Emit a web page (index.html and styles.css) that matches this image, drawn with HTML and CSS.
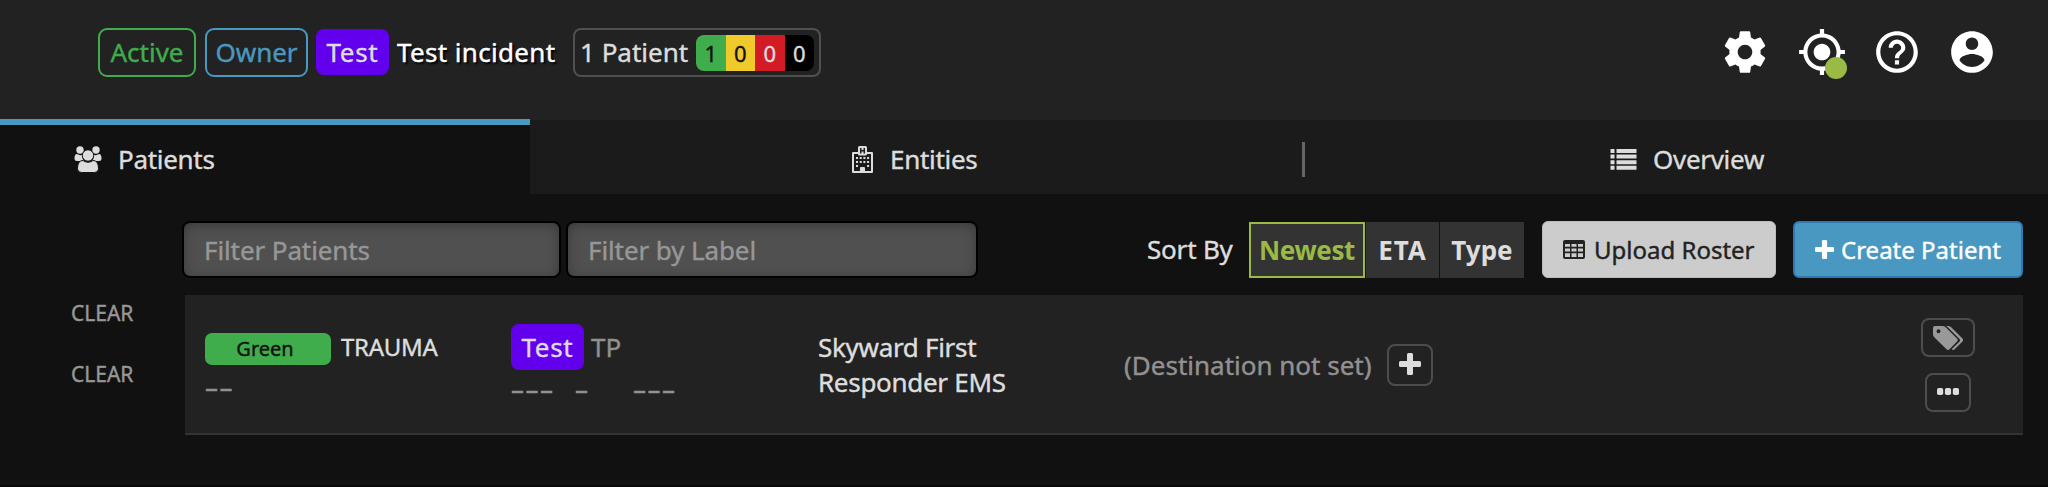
FILE: index.html
```html
<!DOCTYPE html>
<html lang="en">
<head>
    <meta charset="UTF-8">
    <meta name="viewport" content="width=device-width, initial-scale=1.0">
    <title>Test incident</title>

    <link rel="stylesheet" href="styles.css">
</head>
<body>
    <header class="header">
        <div class="badge active">Active</div>
        <div class="badge owner">Owner</div>
        <div class="label">Test</div>
        <h1>Test incident</h1>
        <div class="patient-count">
            <span>1 Patient</span>
            <div class="counts">
                <span class="green">1</span>
                <span class="yellow">0</span>
                <span class="red">0</span>
                <span class="black">0</span>
            </div>
        </div>

        <nav class="header-icons">
            <svg viewBox="0 0 24 24"><path d="M19.43 12.98c.04-.32.07-.64.07-.98s-.03-.66-.07-.98l2.11-1.65c.19-.15.24-.42.12-.64l-2-3.46c-.12-.22-.39-.3-.61-.22l-2.49 1c-.52-.4-1.08-.73-1.69-.98l-.38-2.65C14.46 2.18 14.25 2 14 2h-4c-.25 0-.46.18-.49.42l-.38 2.65c-.61.25-1.17.59-1.69.98l-2.49-1c-.23-.09-.49 0-.61.22l-2 3.46c-.13.22-.07.49.12.64l2.11 1.65c-.04.32-.07.65-.07.98s.03.66.07.98l-2.11 1.65c-.19.15-.24.42-.12.64l2 3.46c.12.22.39.3.61.22l2.49-1c.52.4 1.08.73 1.69.98l.38 2.65c.03.24.24.42.49.42h4c.25 0 .46-.18.49-.42l.38-2.65c.61-.25 1.17-.59 1.69-.98l2.49 1c.23.09.49 0 .61-.22l2-3.46c.12-.22.07-.49-.12-.64l-2.11-1.65zM12 15.5c-1.93 0-3.5-1.57-3.5-3.5s1.57-3.5 3.5-3.5 3.5 1.57 3.5 3.5-1.57 3.5-3.5 3.5z"/></svg>
            <div class="location">
                <svg viewBox="0 0 24 24"><path d="M12 8c-2.21 0-4 1.790-4 4s1.790 4 4 4 4-1.790 4-4-1.790-4-4-4zm8.940 3c-.46-4.170-3.770-7.480-7.940-7.940V1h-2v2.060C6.830 3.520 3.520 6.830 3.060 11H1v2h2.060c.46 4.170 3.770 7.480 7.940 7.940V23h2v-2.060c4.170-.46 7.480-3.770 7.940-7.940H23v-2h-2.060zM12 19c-3.870 0-7-3.130-7-7s3.130-7 7-7 7 3.130 7 7-3.130 7-7 7z"/></svg>
                <span class="status-dot"></span>
            </div>
            <svg viewBox="0 0 24 24"><path d="M11 18h2v-2h-2v2zm1-16C6.480 2 2 6.480 2 12s4.480 10 10 10 10-4.480 10-10S17.520 2 12 2zm0 18c-4.410 0-8-3.590-8-8s3.590-8 8-8 8 3.590 8 8-3.590 8-8 8zm0-14c-2.210 0-4 1.790-4 4h2c0-1.100.9-2 2-2s2 .9 2 2c0 2-3 1.750-3 5h2c0-2.250 3-2.500 3-5 0-2.210-1.790-4-4-4z"/></svg>
            <svg viewBox="0 0 24 24"><path d="M12 2C6.480 2 2 6.480 2 12s4.480 10 10 10 10-4.480 10-10S17.520 2 12 2zm0 3c1.660 0 3 1.340 3 3s-1.340 3-3 3-3-1.340-3-3 1.340-3 3-3zm0 14.200c-2.500 0-4.710-1.280-6-3.220.03-1.990 4-3.080 6-3.080 1.990 0 5.970 1.090 6 3.080-1.290 1.940-3.500 3.220-6 3.220z"/></svg>
        </nav>
    </header>

    <nav class="tabs">
        <div class="tab selected">
            <svg class="icon-users" viewBox="0 0 28 27">
                <circle cx="6" cy="4" r="3.700"/><circle cx="22" cy="4" r="3.700"/>
                <path d="M3 8q3 2 5.500.5Q7.500 12 10 15H3q-2.500 0-2.500-2.500Q.5 8 3 8zM25 8q-3 2-5.500.5Q20.500 12 18 15h7q2.500 0 2.500-2.500Q27.500 8 25 8z"/>
                <circle class="front" cx="14" cy="9.500" r="5.700"/>
                <path class="front" d="M9 14.500q5 3.500 10 0 5.500 0 5.500 8 0 4-4 4h-13q-4 0-4-4 0-8 5.500-8z"/>
            </svg>
            <span>Patients</span>
        </div>
        <div class="tab entities">
            <svg class="icon-hospital" viewBox="0 0 21 27">
                <path fill-rule="evenodd" d="M6 6V1.500Q6 0 7.500 0h6Q15 0 15 1.500V6h5q1 0 1 1v19q0 1-1 1H1q-1 0-1-1V7q0-1 1-1zM2 8v17h6v-3q0-1 1-1h3q1 0 1 1v3h6V8h-4q0 1.500-1.500 1.500h-6Q6 9.500 6 8zM8 2v5.500h1.500V5.500h2V7.500H13V2h-1.500v2h-2V2z"/>
                <path d="M4 11h2v2H4zm3.700 0h2v2h-2zm3.700 0h2v2h-2zm3.700 0h2v2h-2zM4 15h2v2H4zm3.700 0h2v2h-2zm3.700 0h2v2h-2zm3.700 0h2v2h-2zM4 19h2v2H4zm11.100 0h2v2h-2z"/>
            </svg>
            <span>Entities</span>
        </div>
        <div class="tab overview">
            <svg class="icon-list" viewBox="0 0 26 21">
                <path d="M0 0h4v4H0zM6 0h20v4H6zM0 5.600h4v4H0zM6 5.600h20v4H6zM0 11.200h4v4H0zM6 11.200h20v4H6zM0 16.800h4v4H0zM6 16.800h20v4H6z"/>
            </svg>
            <span>Overview</span>
        </div>
    </nav>

    <div class="toolbar">
        <input type="text" class="filter-patients" placeholder="Filter Patients">
        <input type="text" class="filter-label" placeholder="Filter by Label">
        <span class="sort-title">Sort By</span>
        <div class="sort">
            <button class="newest">Newest</button>
            <button class="eta">ETA</button>
            <button class="type">Type</button>
        </div>
        <button class="btn upload">
            <svg viewBox="0 0 22 19"><path fill-rule="evenodd" d="M2 0h18q2 0 2 2v15q0 2-2 2H2q-2 0-2-2V2q0-2 2-2zM2 4v2.800h5V4zm6.500 0v2.800h5V4zM15 4v2.800h5V4zM2 8.500v3h5v-3zm6.500 0v3h5v-3zm6.500 0v3h5v-3zM2 13.200v3.800h5v-3.800zm6.500 0v3.800h5v-3.800zm6.500 0v3.800h5v-3.800z"/></svg>
            <span>Upload Roster</span>
        </button>
        <button class="btn create">
            <svg viewBox="0 0 22 22"><path d="M8 1.500Q8 0 9.500 0h3Q14 0 14 1.500V8h6.500Q22 8 22 9.500v3q0 1.500-1.500 1.500H14v6.500q0 1.500-1.500 1.500h-3Q8 22 8 20.500V14H1.500Q0 14 0 12.500v-3Q0 8 1.500 8H8z"/></svg>
            <span>Create Patient</span>
        </button>
    </div>

    <main class="content">
        <aside class="clear-links">
            <a>CLEAR</a>
            <a>CLEAR</a>
        </aside>

        <div class="patient">
            <div class="cell">
                <div class="triage">
                    <span class="triage-color">Green</span>
                    <span class="trauma">TRAUMA</span>
                </div>
                <div class="age">––</div>
            </div>
            <div class="cell">
                <div class="name">
                    <span class="label">Test</span>
                    <span class="muted tp">TP</span>
                </div>
                <div class="vitals"><span>–––</span><span>–</span><span>–––</span></div>
            </div>
            <div class="cell agency">Skyward First<br>Responder EMS</div>
            <div class="cell destination">
                <span class="muted">(Destination not set)</span>
                <button class="outline add">
                    <svg viewBox="0 0 22 22"><path d="M8 1.500Q8 0 9.500 0h3Q14 0 14 1.500V8h6.500Q22 8 22 9.500v3q0 1.500-1.500 1.500H14v6.500q0 1.500-1.500 1.500h-3Q8 22 8 20.500V14H1.500Q0 14 0 12.500v-3Q0 8 1.500 8H8z"/></svg>
                </button>
            </div>
            <div class="actions">
                <button class="outline tags">
                    <svg viewBox="0 0 30 24"><path fill-rule="evenodd" d="M2 0h8q1.500 0 3 1.500l11 11q1.500 1.500 0 3l-7.500 7.800q-1.500 1.400-3 0l-12-11.800Q0 10 0 8.500V2Q0 0 2 0zM5.500 3.300a2 2 0 1 0 0 4 2 2 0 0 0 0-4z"/><path d="M13 0h2.500q1.500 0 3 1.500l11 11q1 1.500 0 3l-7.800 7.800q-1.500 1.400-3 0l7.600-7.600q1.500-1.500 0-3L15.500 2Q14 .5 13 0z"/></svg>
                </button>
                <button class="outline more">
                    <svg viewBox="0 0 22 7"><rect width="6.200" height="7" rx="1.800"/><rect x="7.900" width="6.200" height="7" rx="1.800"/><rect x="15.800" width="6.200" height="7" rx="1.800"/></svg>
                </button>
            </div>
        </div>
    </main>
</body>
</html>
```

FILE: styles.css
```css
* {
    box-sizing: border-box;
}
body {
    margin: 0;
    height: 487px;
    overflow: hidden;
    background-color: #111;
    color: #ddd;
    font-family: "Noto Sans", sans-serif;
    font-size: 26px;
    line-height: 35px;
    white-space: nowrap;
    -webkit-text-stroke: .4px;
    border-bottom: 2px solid #080808;
}
button, input {
    font-family: inherit;
    font-size: inherit;
    color: inherit;
    padding: 0;
    margin: 0;
}
svg {
    display: block;
    fill: currentColor;
    flex: none;
}
.muted { color: #919191; }

/* header */
.header {
    height: 120px;
    padding: 28px 51px 0 98px;
    background-color: #222;
    display: flex;
    align-items: flex-start;
}
.badge {
    height: 49px;
    line-height: 45px;
    border: 2px solid;
    border-radius: 9px;
    text-align: center;
}
.active { width: 98px; color: #3fad4b; margin-right: 9px; }
.owner { width: 103px; color: #4998c1; margin-right: 8px; }
.label {
    width: 73px;
    height: 46px;
    line-height: 46px;
    border-radius: 8px;
    background-color: #6200ee;
    text-align: center;
    letter-spacing: .7px;
}
.header .label { margin-top: 1px; }
h1 {
    width: 176px;
    margin: 0;
    padding-left: 8px;
    font-size: 26px;
    font-weight: 400;
    line-height: 49px;
    letter-spacing: .35px;
    color: #fff;
    text-shadow: 2px 2px 2px #000;
}
.patient-count {
    width: 248px;
    height: 49px;
    margin-left: 8px;
    padding: 0 5px 0 5px;
    border: 2px solid #505050;
    border-radius: 8px;
    display: flex;
    align-items: center;
    justify-content: space-between;
}
.counts {
    display: flex;
    width: 118px;
    height: 36px;
    border-radius: 8px;
    overflow: hidden;
    font-size: 22px;
    line-height: 36px;
    text-align: center;
}
.counts span { flex: 1; }
.green { background-color: #3fad4b; color: #111; }
.yellow { background-color: #f0ca2a; color: #111; }
.red { background-color: #d31b25; }
.black { background-color: #000; }
.header-icons {
    margin-left: auto;
    display: flex;
    gap: 25px;
    color: #fff;
}
.header-icons svg { width: 50px; height: 50px; margin-top: -1px; }
.location { position: relative; margin: 0 0 0 2px; }
.status-dot {
    position: absolute;
    left: 28px;
    top: 29px;
    width: 22px;
    height: 22px;
    border-radius: 50%;
    background-color: #9aba45;
}

/* tabs */
.tabs {
    height: 74px;
    display: flex;
    background-color: #1b1b1b;
    letter-spacing: -.3px;
}
.tab {
    display: flex;
    align-items: center;
    padding-top: 5px;
}
.selected {
    width: 530px;
    margin-top: -1px;
    padding: 0 0 0 74px;
    background-color: #111;
    border-top: 6px solid #4998c1;
}
.icon-users { width: 28px; height: 27px; margin-right: 16px; }
.icon-users .front { stroke: #111; stroke-width: 1; }
.entities { position: relative; width: 775px; padding-left: 322px; }
.entities::after {
    content: "";
    position: absolute;
    right: 0;
    top: 22px;
    width: 3px;
    height: 35px;
    background-color: #666;
}
.icon-hospital { width: 21px; height: 27px; margin-right: 17px; }
.overview { padding-left: 305px; }
.icon-list { width: 27px; height: 21px; margin-right: 16px; }

/* filters and sorting */
.toolbar {
    display: flex;
    align-items: center;
    height: 57px;
    margin: 27px 25px 17px 182px;
}
input {
    height: 57px;
    padding: 0 20px;
    border: 2px solid #000;
    border-radius: 8px;
    background-color: #505050;
    box-shadow: inset 0 2px 12px rgba(0, 0, 0, .3);
    letter-spacing: -.1px;
}
input::placeholder { color: #979797; opacity: 1; }
.filter-patients { width: 379px; margin-right: 5px; }
.filter-label { width: 412px; }
.sort-title { width: 102px; margin-left: 169px; letter-spacing: -.2px; }
.sort { display: flex; gap: 1px; }
.sort button {
    height: 56px;
    border: 0;
    background-color: #333;
    font-weight: 700;
    -webkit-text-stroke: 0;
}
.sort .newest { width: 116px; border: 2px solid #9aba45; color: #9aba45; letter-spacing: -.4px; }
.sort .eta { width: 73px; letter-spacing: 1px; }
.sort .type { width: 84px; }
.btn {
    display: flex;
    align-items: center;
    height: 57px;
    border-radius: 6px;
    font-size: 24px;
}
.upload {
    width: 234px;
    margin-left: 18px;
    padding: 0 0 1px 20px;
    border: 1px solid #bbb;
    background-color: #ccc;
    color: #222;
}
.upload svg { width: 22px; height: 19px; margin-right: 9px; }
.create {
    width: 230px;
    margin-left: 17px;
    padding: 0 0 1px 20px;
    border: 2px solid #3277b0;
    background-color: #4998c1;
    color: #fff;
}
.create svg { width: 19px; height: 19px; margin-right: 7px; }

/* patient list */
.content { display: flex; }
.clear-links {
    width: 185px;
    padding-left: 71px;
    font-size: 21px;
    color: #979797;
}
.clear-links a { display: block; line-height: 36px; margin-bottom: 25px; }
.patient {
    width: 1838px;
    height: 140px;
    padding-left: 20px;
    background-color: #222;
    border-bottom: 2px solid #333;
    display: grid;
    grid-template-columns: 306px 307px 306px 306px 1fr;
}
.triage { display: flex; height: 32px; margin-top: 38px; }
.triage-color {
    width: 126px;
    height: 32px;
    margin-right: 10px;
    padding-right: 6px;
    border-radius: 7px;
    background-color: #3fad4b;
    color: #111;
    font-size: 20px;
    line-height: 32px;
    text-align: center;
}
.trauma { font-size: 24px; line-height: 28px; letter-spacing: -.3px; }
.age, .vitals { color: #919191; letter-spacing: 1.500px; }
.age { margin-top: 5px; }
.name { display: flex; margin-top: 29px; }
.tp { line-height: 46px; margin-left: 7px; }
.vitals { display: flex; margin-top: 2px; }
.vitals span:nth-child(1) { width: 64px; }
.vitals span:nth-child(2) { width: 58px; }
.agency { padding-top: 35px; letter-spacing: -.3px; }
.destination { display: flex; align-items: flex-start; line-height: 46px; padding-top: 47px; width: 309px; }
.outline {
    display: flex;
    align-items: center;
    justify-content: center;
    border: 2px solid #4d4d4d;
    border-radius: 8px;
    background: none;
}
.add { width: 46px; height: 42px; margin: 2px 0 0 auto; }
.add svg { width: 22px; height: 22px; margin-bottom: 2px; }
.actions {
    display: flex;
    flex-direction: column;
    align-items: center;
    padding: 23px 48px 0 0;
    margin-left: auto;
    gap: 16px;
}
.tags { width: 54px; height: 39px; color: #999; }
.tags svg { width: 30px; height: 24px; }
.more { width: 46px; height: 39px; }
.more svg { width: 22px; height: 7px; margin-bottom: 2px; }
```
